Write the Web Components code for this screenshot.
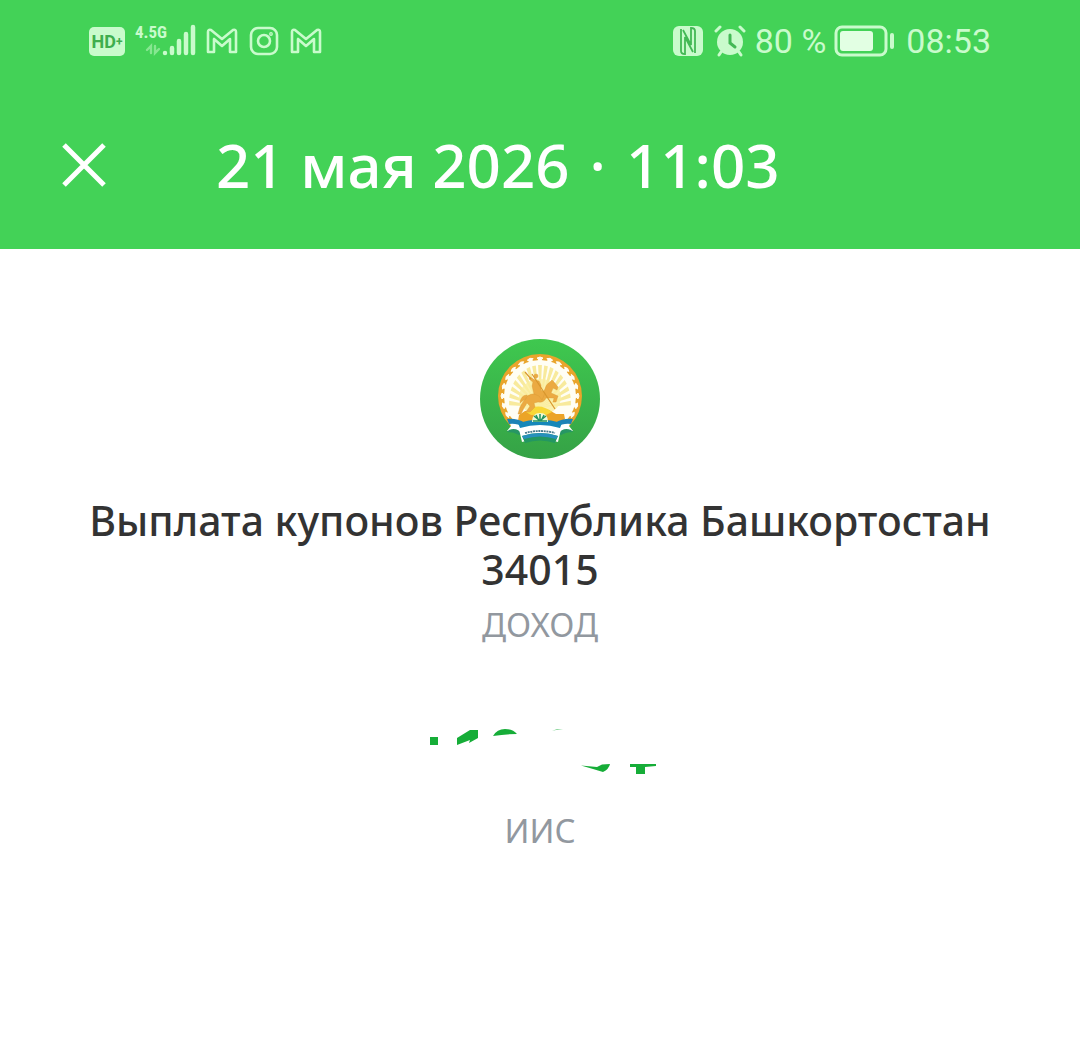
<!DOCTYPE html>
<html lang="ru">
<head>
<meta charset="UTF-8">
<meta name="viewport" content="width=device-width, initial-scale=1">
<title>Выплата купонов</title>
<style>
    body {
        margin: 0;
        background: #fff;
        color: #333;
        font-family: "Noto Sans", "Open Sans", sans-serif;
    }
</style>
</head>
<body>
<operation-screen>
    <status-bar slot="header" battery="80" time="08:53"></status-bar>
    <title-bar slot="header">
        <span>21 мая 2026</span>
        <span>·</span>
        <span>11:03</span>
    </title-bar>
    <operation-details>
        <bond-logo slot="logo"></bond-logo>
        <span slot="name">Выплата купонов Республика Башкортостан 34015</span>
        <span slot="type">ДОХОД</span>
        <hidden-amount slot="amount"></hidden-amount>
        <span slot="account">ИИС</span>
    </operation-details>
</operation-screen>

<script>
class OperationScreen extends HTMLElement {
    constructor() {
        super();
        this.attachShadow({ mode: 'open' });
    }

    connectedCallback() {
        this.shadowRoot.innerHTML = `
            <style>
                :host {
                    display: block;
                    min-height: 100vh;
                }
                header {
                    background: #43d257;
                    color: #fff;
                }
            </style>
            <header><slot name="header"></slot></header>
            <main><slot></slot></main>
        `;
    }
}

class StatusBar extends HTMLElement {
    constructor() {
        super();
        this.attachShadow({ mode: 'open' });
    }

    connectedCallback() {
        const battery = this.getAttribute('battery');
        const time = this.getAttribute('time');
        const mail = `
            <svg width="32" height="26" viewBox="0 0 32 26" fill="none" stroke="currentColor" stroke-width="2.6" stroke-linejoin="round">
                <path d="M2 24V4q0-3 3-2l11 9 11-9q3-1 3 2v20h-6V11l-8 7-8-7v13z"/>
            </svg>`;

        this.shadowRoot.innerHTML = `
            <style>
                :host {
                    display: flex;
                    justify-content: space-between;
                    align-items: center;
                    height: 82px;
                    padding: 0 89px;
                    color: #c9fbcc;
                    font: 34px/40px Roboto, sans-serif;
                }
                div {
                    display: flex;
                    align-items: center;
                }
                svg {
                    display: block;
                    flex: none;
                }
                .left {
                    gap: 10px;
                }
                .hd {
                    width: 36px;
                    border-radius: 5px;
                    background: #c9fbcc;
                    color: #3fae4e;
                    font: bold 18px/29px Roboto, sans-serif;
                    text-align: center;
                }
                .hd small {
                    font-size: 12px;
                    line-height: 12px;
                    vertical-align: 2px;
                }
                .network {
                    display: grid;
                    align-items: start;
                    width: 61px;
                    height: 36px;
                }
                .network > * {
                    grid-area: 1 / 1;
                }
                .network span {
                    font: bold 17px/18px "Liberation Sans Narrow", "Roboto Condensed", Roboto, sans-serif;
                }
                .right {
                    gap: 8px;
                }
                .time {
                    margin-left: 4px;
                }
            </style>
            <div class="left">
                <span class="hd">HD<small>+</small></span>
                <div class="network">
                    <svg width="61" height="36" viewBox="0 0 61 36" fill="none" stroke="currentColor" stroke-linecap="round">
                        <path d="M30 30v0M37 25v5M44 18v12M51 11v19M58 4v26" stroke-width="4.5"/>
                        <path d="M16 30v-7l-4 4M20 23v7l4-4" stroke-width="2.4" opacity=".5"/>
                    </svg>
                    <span>4.5G</span>
                </div>
                ${mail}
                <svg width="32" height="30" viewBox="0 0 32 30" fill="none" stroke="currentColor" stroke-width="2.6">
                    <rect x="3" y="2" width="26" height="26" rx="7"/>
                    <circle cx="16" cy="15" r="6"/>
                    <circle cx="23" cy="8" r=".6" fill="currentColor"/>
                </svg>
                ${mail}
            </div>
            <div class="right">
                <svg width="32" height="32" viewBox="0 0 32 32">
                    <rect x="0" y="1" width="30" height="30" rx="6" fill="currentColor"/>
                    <path d="M8 4v22q0 3 4 3V12l8 15M22 28V6q0-3-4-3v17L10 5" fill="none" stroke="#43b955" stroke-width="1.8"/>
                </svg>
                <svg width="34" height="32" viewBox="0 0 34 32" fill="none" stroke-linecap="round">
                    <circle cx="17" cy="17" r="13" fill="currentColor"/>
                    <path d="M3 6l4-4M27 2l4 4M8 27l-2 3M26 27l2 3" stroke="currentColor" stroke-width="3"/>
                    <path d="M17 10v8l5 4" stroke="#43b955" stroke-width="3"/>
                </svg>
                <span>${battery} %</span>
                <svg width="60" height="32" viewBox="0 0 60 32">
                    <rect x="2" y="2" width="50" height="28" rx="6" fill="none" stroke="currentColor" stroke-width="3"/>
                    <rect x="6" y="6" width="33" height="20" rx="3" fill="#e2ffe3"/>
                    <path d="M58 10v12" stroke="currentColor" stroke-width="4" stroke-linecap="round"/>
                </svg>
                <span class="time">${time}</span>
            </div>
        `;
    }
}

class TitleBar extends HTMLElement {
    constructor() {
        super();
        this.attachShadow({ mode: 'open' });
    }

    connectedCallback() {
        this.shadowRoot.innerHTML = `
            <style>
                :host {
                    display: flex;
                    align-items: center;
                    gap: 96px;
                    height: 165px;
                    padding: 0 48px 2px;
                }
                button {
                    flex: none;
                    width: 72px;
                    height: 72px;
                    padding: 0;
                    border: none;
                    background: none;
                    color: inherit;
                    cursor: pointer;
                }
                svg {
                    display: block;
                }
                h1 {
                    display: flex;
                    gap: 20px;
                    margin: 0;
                    font-size: 60px;
                    font-weight: 500;
                    line-height: 80px;
                    white-space: nowrap;
                }
            </style>
            <button type="button" aria-label="Закрыть">
                <svg width="72" height="72" viewBox="0 0 72 72" stroke="currentColor" stroke-width="5">
                    <path d="M16 16l40 40M56 16L16 56"/>
                </svg>
            </button>
            <h1><slot></slot></h1>
        `;
    }
}

class OperationDetails extends HTMLElement {
    constructor() {
        super();
        this.attachShadow({ mode: 'open' });
    }

    connectedCallback() {
        this.shadowRoot.innerHTML = `
            <style>
                :host {
                    display: flex;
                    flex-direction: column;
                    align-items: center;
                    padding: 90px 48px;
                    text-align: center;
                }
                h2 {
                    margin: 37px 0 0;
                    font-size: 41px;
                    font-weight: 500;
                    line-height: 49px;
                }
                p {
                    margin: 0;
                    color: #92989f;
                    font-size: 33px;
                    line-height: 40px;
                }
                .type {
                    margin-top: 11px;
                }
                .amount {
                    margin: 80px 0 36px;
                }
            </style>
            <slot name="logo"></slot>
            <h2><slot name="name"></slot></h2>
            <p class="type"><slot name="type"></slot></p>
            <div class="amount"><slot name="amount"></slot></div>
            <p><slot name="account"></slot></p>
        `;
    }
}

class BondLogo extends HTMLElement {
    constructor() {
        super();
        this.attachShadow({ mode: 'open' });
    }

    // white field with a toothed edge inside the golden ring
    scallops() {
        let d = '';
        for (let i = 0; i < 24; i++) {
            const a = i * Math.PI / 12;
            const point = (r, n) => `${(60 + r * Math.cos(a + n)).toFixed(1)} ${(57 + r * Math.sin(a + n)).toFixed(1)}`;
            d += `M${point(34, -0.06)}L${point(37, -0.04)}L${point(38, -0.08)}L${point(39, 0)}L${point(38, 0.08)}L${point(37, 0.04)}L${point(34, 0.06)}z`;
        }
        return d;
    }

    rays() {
        let d = '';
        for (let i = 0; i < 17; i++) {
            const a = Math.PI + i * Math.PI / 16;
            const x = n => (60 + 31 * Math.cos(a + n)).toFixed(1);
            const y = n => (64 + 38 * Math.sin(a + n)).toFixed(1);
            d += `M60 68L${x(-0.06)} ${y(-0.06)}L${x(0.06)} ${y(0.06)}z`;
        }
        return d;
    }

    connectedCallback() {
        this.shadowRoot.innerHTML = `
            <style>
                :host {
                    display: block;
                }
                svg {
                    display: block;
                }
            </style>
            <svg width="120" height="120" viewBox="0 0 120 120" role="img" aria-label="Республика Башкортостан">
                <defs>
                    <linearGradient id="field" x1="0" y1="0" x2="0" y2="1">
                        <stop offset="0" stop-color="#3fc84f"/>
                        <stop offset="1" stop-color="#35a246"/>
                    </linearGradient>
                </defs>
                <circle cx="60" cy="60" r="60" fill="url(#field)"/>
                <circle cx="60" cy="57" r="42" fill="#e9a52b"/>
                <g fill="#fffef4">
                    <circle cx="60" cy="57" r="36"/>
                    <path d="${this.scallops()}" stroke="#fffef4"/>
                </g>
                <path d="${this.rays()}" fill="#f8ea9c"/>
                <ellipse cx="60" cy="58" rx="21" ry="18" fill="#faed9e" opacity=".8"/>
                <path d="M38 82l1-6 6-4 8-1 7-1 9 1 7 4 8 0 1 5-4 5-40 2z" fill="#eca427"/>
                <path d="M46 73q12-11 26 0l-6 3-15 0z" fill="#f8d736"/>
                <g fill="#ebaa42" stroke="#d99a35" stroke-width=".4" stroke-linejoin="round">
                    <path d="M47 57q5-3 10-2 6 0 8-5 1-5 5-7l2-2 2 2 4 5-1 3-4-2-2 5 7 3-2 6-3 0 1-4-8 0q-2 5-8 4l-4 1 1 4-5 5-4 0 4-6-3-3-3 5-3 6-3 0 2-7 3-5z"/>
                    <path d="M47 56q-6 0-7 8 3-3 6-4z"/>
                    <path d="M54 55l-2-8 1-4-4-3 1-2 5 3 4 1 2 4 0 5 4 3-3 7-3-4z"/>
                    <circle cx="56" cy="37" r="2"/>
                </g>
                <path d="M45 33l6 7M52 35l23 35" fill="none" stroke="#d8972e" stroke-width="1.2"/>
                <path d="M28 80q10 0 18 5l-6 10q-3-4-13-3l4-5zM92 80q-10 0-18 5l6 10q3-4 13-3l-4-5z" fill="#fff"/>
                <path d="M27 80q10-1 18 4l-2 4q-6-4-14-3zM93 80q-10-1-18 4l2 4q6-4 14-3z" fill="#1e82b6"/>
                <path d="M29 91q8-3 13 4l-3 1q-5-3-12-3zM91 91q-8-3-13 4l3 1q5-3 12-3z" fill="#279665"/>
                <path d="M38 86q22-7 44 0l-4 17q-18-6-36 0z" fill="#fff"/>
                <path d="M38 84q22-7 44 0l-2 5q-20-6-40 0z" fill="#1687b9"/>
                <path d="M42 97q18-6 36 0l-3 7q-15-5-30 0z" fill="#239762"/>
                <path d="M42 97q18-6 36 0l-2 3q-16-5-32 0z" fill="#2790bc"/>
                <path d="M45 94q15-4 30 0" fill="none" stroke="#477b8d" stroke-width="1.8" stroke-dasharray="2 .7"/>
                <path d="M52 83q0-9 8-9t8 9z" fill="#effad5"/>
                <path d="M60 82v-7M59 81l-5-4M61 81l5-4M59 82l-3-6M61 82l3-6M53 82h14" fill="none" stroke="#23935e" stroke-width="1.5"/>
            </svg>
        `;
    }
}

class HiddenAmount extends HTMLElement {
    constructor() {
        super();
        this.attachShadow({ mode: 'open' });
    }

    connectedCallback() {
        this.shadowRoot.innerHTML = `
            <style>
                :host {
                    display: block;
                }
                svg {
                    display: block;
                }
            </style>
            <svg width="240" height="50" viewBox="0 0 240 50" fill="#16ad38" role="img" aria-label="Сумма скрыта">
                <path d="M10 12h8v8h-8z"/>
                <path d="M37 13l13-8h8v8l-9 5 1-3-13 5z"/>
                <path d="M73 11q4-7 12-7 8 0 12 5-12 0-24 2z"/>
                <path d="M132 6l5-2 6 0-7 1z" opacity=".6"/>
                <path d="M161 40.500l16 1.500 5-2.500 8-.5q-1 5-7 8l-10-3z"/>
                <path d="M210 39h26v2l-11 1v7h-9v-7h-6z"/>
            </svg>
        `;
    }
}

customElements.define('operation-screen', OperationScreen);
customElements.define('status-bar', StatusBar);
customElements.define('title-bar', TitleBar);
customElements.define('operation-details', OperationDetails);
customElements.define('bond-logo', BondLogo);
customElements.define('hidden-amount', HiddenAmount);
</script>
</body>
</html>
